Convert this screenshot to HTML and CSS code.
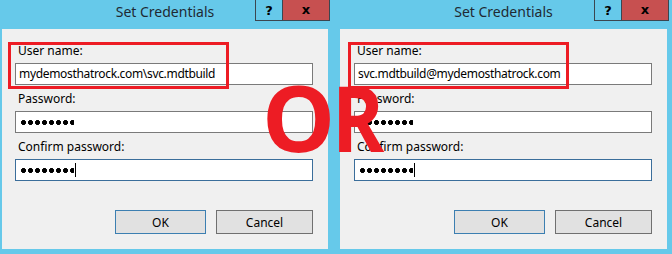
FILE: index.html
```
<!DOCTYPE html>
<html lang="en">
<head>
    <meta charset="UTF-8">
    <meta name="viewport" content="width=device-width, initial-scale=1.0">
    <title>Set Credentials</title>
    <link rel="stylesheet" href="styles.css">
</head>
<body>
    <div class="desktop">
        <!-- Domain\user form -->
        <div class="window window-left">
            <div class="titlebar">
                <span class="title">Set Credentials</span>
                <div class="caption-buttons">
                    <span class="cap-help">?</span>
                    <span class="cap-close">x</span>
                </div>
            </div>
            <div class="client">
                <div class="form-group">
                    <label>User name:</label>
                    <div class="field"><span class="field-text">mydemosthatrock.com\svc.mdtbuild</span></div>
                </div>
                <div class="form-group">
                    <label>Password:</label>
                    <div class="field"><span class="dots"></span></div>
                </div>
                <div class="form-group">
                    <label>Confirm password:</label>
                    <div class="field field-focus"><span class="dots"></span><span class="caret"></span></div>
                </div>
                <div class="actions">
                    <button class="btn btn-ok">OK</button>
                    <button class="btn btn-cancel">Cancel</button>
                </div>
                <div class="highlight"></div>
            </div>
        </div>

        <!-- UPN form -->
        <div class="window window-right">
            <div class="titlebar">
                <span class="title">Set Credentials</span>
                <div class="caption-buttons">
                    <span class="cap-help">?</span>
                    <span class="cap-close">x</span>
                </div>
            </div>
            <div class="client">
                <div class="form-group">
                    <label>User name:</label>
                    <div class="field"><span class="field-text">svc.mdtbuild@mydemosthatrock.com</span></div>
                </div>
                <div class="form-group">
                    <label>Password:</label>
                    <div class="field"><span class="dots"></span></div>
                </div>
                <div class="form-group">
                    <label>Confirm password:</label>
                    <div class="field field-focus"><span class="dots"></span><span class="caret"></span></div>
                </div>
                <div class="actions">
                    <button class="btn btn-ok">OK</button>
                    <button class="btn btn-cancel">Cancel</button>
                </div>
                <div class="highlight"></div>
            </div>
        </div>

        <div class="or-mark">O<span class="or-r">R</span></div>
    </div>
</body>
</html>
```

FILE: styles.css
```
html, body {
    margin: 0;
    padding: 0;
}
body {
    font-family: "Noto Sans", "Open Sans", sans-serif;
    background-color: #66c9ea;
    width: 672px;
    height: 254px;
    overflow: hidden;
}
.desktop {
    position: relative;
    display: flex;
    gap: 8px;
    height: 254px;
}
.window {
    display: flex;
    flex-direction: column;
    padding: 0 2px 5px 2px;
    box-sizing: border-box;
    height: 254px;
}
.window-left {
    width: 330px;
}
.window-right {
    width: 331px;
}
.titlebar {
    display: grid;
    height: 29px;
}
.title {
    grid-area: 1 / 1;
    text-align: center;
    font-size: 14px;
    line-height: 20px;
    padding-top: 2px;
    color: #1f2a33;
}
.caption-buttons {
    grid-area: 1 / 1;
    justify-self: end;
    align-self: start;
    display: flex;
    margin-right: -2px;
    border: 1px solid #3b4650;
    border-top: none;
    height: 20px;
}
.cap-help,
.cap-close {
    display: flex;
    align-items: center;
    justify-content: center;
    font-family: "DejaVu Sans", sans-serif;
    font-weight: bold;
    font-size: 13px;
    color: #000;
}
.cap-help {
    width: 26px;
    border-right: 1px solid #3b4650;
    background-color: #66c9ea;
}
.cap-close {
    width: 46px;
    background-color: #c75050;
    padding-bottom: 2px;
    box-sizing: border-box;
}
.client {
    position: relative;
    flex: 1;
    display: flex;
    flex-direction: column;
    background-color: #f0f0f0;
    padding: 14px 15px 15px 13px;
    box-sizing: border-box;
}
.window-right .client {
    padding-left: 14px;
}
.form-group {
    margin-bottom: 6px;
}
label {
    display: block;
    font-size: 12px;
    line-height: 16px;
    padding-left: 3px;
    margin-bottom: 4px;
    color: #000;
}
.field {
    display: flex;
    align-items: center;
    height: 22px;
    box-sizing: border-box;
    background-color: #fff;
    border: 1px solid #7a7a7a;
    padding-left: 3px;
}
.field-focus {
    border-color: #3b6e9b;
}
.field-text {
    font-size: 12px;
    line-height: 18px;
    letter-spacing: -0.33px;
    color: #000;
}
.dots {
    display: block;
    width: 54px;
    height: 5px;
    margin-left: 1px;
    background: radial-gradient(circle, #000 2.2px, transparent 2.7px) 0 0 / 7px 5px repeat-x;
}
.caret {
    display: block;
    width: 1px;
    height: 14px;
    margin-left: 1px;
    background-color: #000;
}
.actions {
    margin-top: auto;
    display: flex;
    justify-content: flex-end;
    gap: 10px;
}
.btn {
    height: 24px;
    font-family: "Noto Sans", "Open Sans", sans-serif;
    font-size: 12px;
    color: #000;
    background-color: #e1e1e1;
    border: 1px solid #707070;
    padding: 0;
}
.btn-ok {
    width: 91px;
    border-color: #3c7fb1;
}
.btn-cancel {
    width: 97px;
}
.highlight {
    position: absolute;
    left: 6px;
    top: 13px;
    width: 221px;
    height: 47px;
    box-sizing: border-box;
    border: 3px solid #ed1c24;
}
.window-right .highlight {
    left: 8px;
}
.or-mark {
    position: absolute;
    left: 262px;
    top: 71px;
    font-family: "Open Sans", sans-serif;
    font-weight: bold;
    font-size: 92px;
    line-height: 92px;
    letter-spacing: -3px;
    color: #ed1c24;
}
.or-r {
    display: inline-block;
    transform: scaleX(0.86);
    transform-origin: left center;
}
```
